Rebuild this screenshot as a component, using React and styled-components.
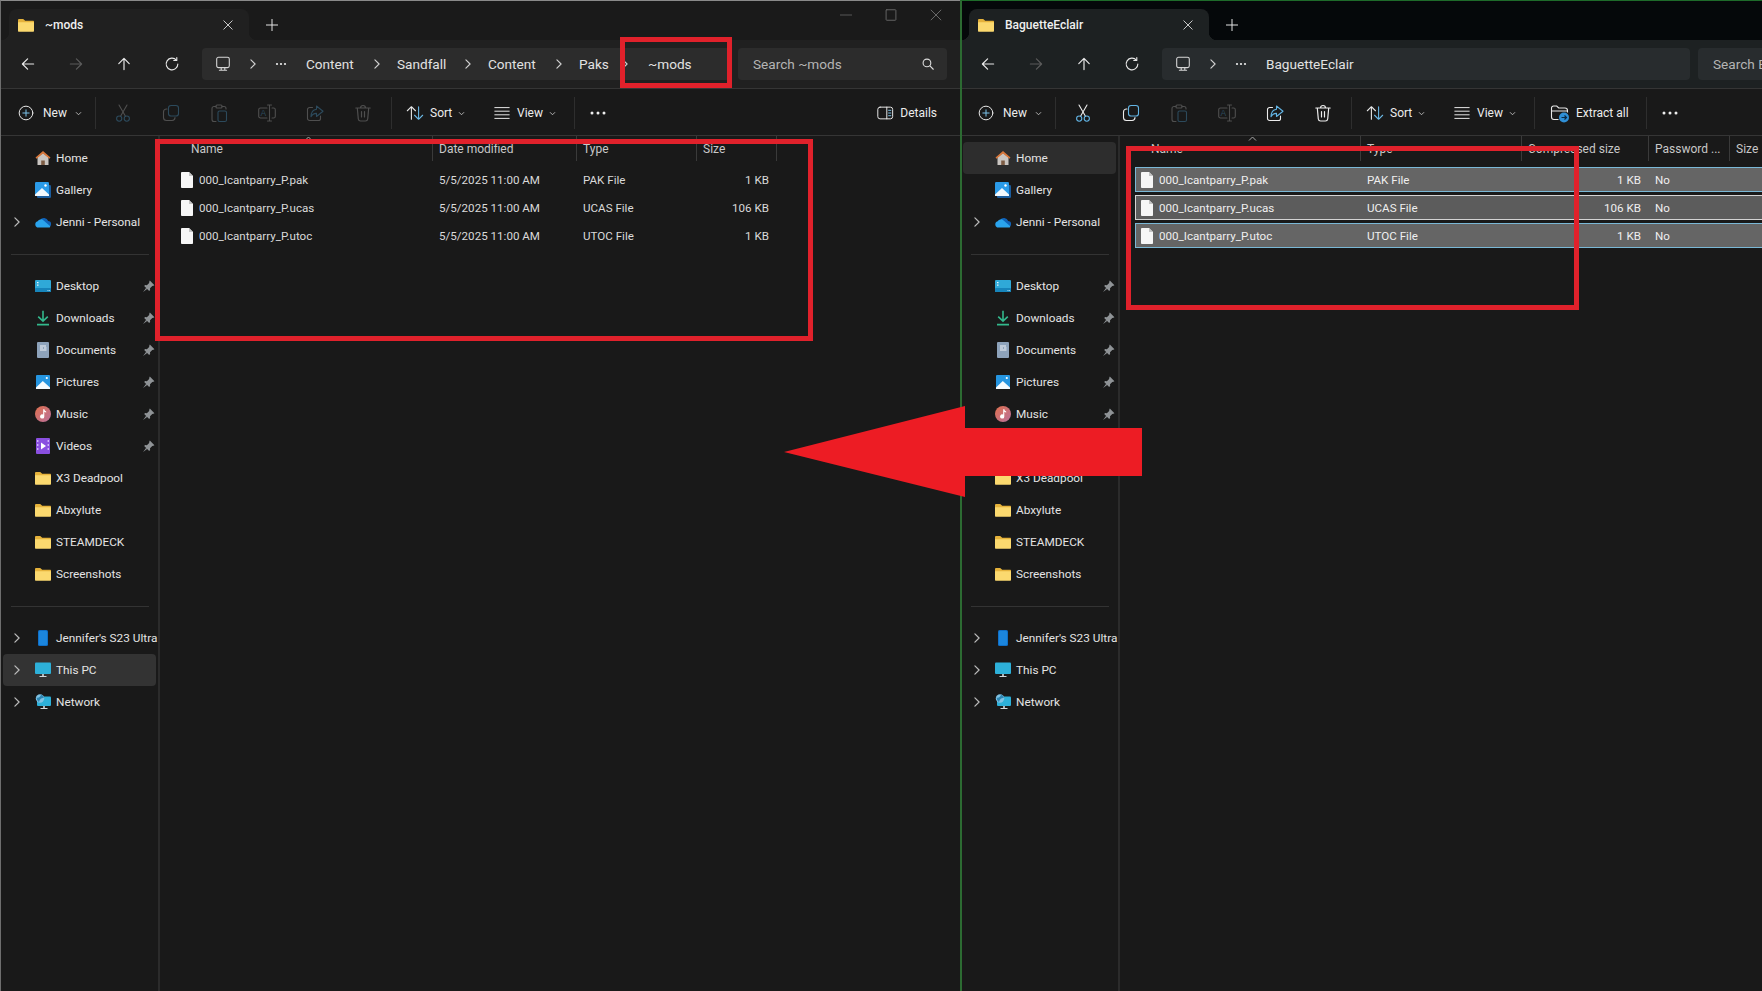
import React from 'react';
import styled, { createGlobalStyle } from 'styled-components';

const GlobalStyle = createGlobalStyle`
  html, body {
    margin: 0;
    padding: 0;
    background: #191919;
    overflow: hidden;
  }
  * {
    box-sizing: border-box;
  }
`;

const Page = styled.div`
  position: relative;
  display: flex;
  width: 1762px;
  height: 991px;
  overflow: hidden;
  font-family: 'Roboto', 'Noto Sans', sans-serif;
  font-size: 12px;
  color: #dcdcdc;
  background: #191919;
`;

const Window = styled.div`
  position: relative;
  display: flex;
  flex-direction: column;
  flex: none;
  width: ${(p) => p.$width}px;
  height: 100%;
  overflow: hidden;
  background: #191919;
  &::before {
    content: '';
    position: absolute;
    inset: 0;
    z-index: 2;
    pointer-events: none;
    border-top: 1px solid ${(p) => p.$edgeTop};
    border-left: ${(p) => p.$edgeWidth}px solid ${(p) => p.$edgeLeft};
  }
`;

const TabBar = styled.div`
  display: flex;
  flex: none;
  height: 40px;
  padding: 9px 0 0 9px;
  background: ${(p) => p.$bg};
`;

const Tab = styled.div`
  position: relative;
  display: flex;
  align-items: center;
  width: 240px;
  height: 31px;
  padding: 0 15px 0 9px;
  border-radius: 8px 8px 0 0;
  background: ${(p) => p.$bg};
  color: #f0f0f0;
  font-weight: 500;
  &::before,
  &::after {
    content: '';
    position: absolute;
    bottom: 0;
    width: 8px;
    height: 8px;
  }
  &::before {
    left: -8px;
    background: radial-gradient(circle at 0 0, transparent 8px, ${(p) => p.$bg} 8.5px);
  }
  &::after {
    right: -8px;
    background: radial-gradient(circle at 100% 0, transparent 8px, ${(p) => p.$bg} 8.5px);
  }
`;

const TabTitle = styled.span`
  flex: 1;
  margin-left: 11px;
`;

const TabPlus = styled.div`
  display: flex;
  align-items: center;
  justify-content: center;
  width: 16px;
  height: 31px;
  margin-left: 15px;
`;

const WindowControls = styled.div`
  display: flex;
  margin-left: auto;
  margin-top: -9px;
  padding-right: 17px;
  gap: 31px;
  height: 30px;
  align-items: center;
`;

const NavRow = styled.div`
  display: flex;
  flex: none;
  align-items: center;
  height: 49px;
  padding-left: 4px;
  padding-bottom: 1px;
  background: ${(p) => p.$bg};
  border-bottom: 1px solid #353535;
`;

const NavButton = styled.div`
  display: flex;
  flex: none;
  align-items: center;
  justify-content: center;
  width: 48px;
`;

const AddressBar = styled.div`
  display: flex;
  flex: none;
  align-items: center;
  width: 528px;
  height: 32px;
  margin-left: 6px;
  padding-left: 12px;
  border-radius: 4px;
  background: ${(p) => p.$bg};
  font-size: 13.6px;
  color: #e2e2e2;
`;

const PathChevron = styled.span`
  display: flex;
  margin-left: 14px;
`;

const PathDots = styled.span`
  display: flex;
  margin: 0 18px 0 14px;
`;

const Crumb = styled.span`
  display: flex;
  flex: none;
  align-items: center;
  justify-content: space-between;
  width: ${(p) => p.$w}px;
  padding-right: 13px;
`;

const CurrentCrumb = styled.span`
  margin-left: ${(p) => p.$gap || 0}px;
`;

const SearchBox = styled.div`
  display: flex;
  flex: none;
  align-items: center;
  justify-content: space-between;
  width: 209px;
  height: 32px;
  margin-left: 8px;
  padding: 0 12px 0 15px;
  border-radius: 4px;
  background: ${(p) => p.$bg};
  font-size: 13.6px;
  white-space: nowrap;
  color: #b4b4b4;
`;

const Toolbar = styled.div`
  display: flex;
  flex: none;
  align-items: center;
  height: 47px;
  padding: 2px 0 0 17px;
  border-bottom: 1px solid #353535;
  background: #191919;
`;

const ToolSep = styled.span`
  flex: none;
  width: 1px;
  height: 32px;
  margin: 0 3px 0 4px;
  background: #2e2e2e;
`;

const TextTool = styled.div`
  display: flex;
  flex: none;
  align-items: center;
  gap: ${(p) => p.$gap}px;
  width: ${(p) => p.$w}px;
  padding-left: ${(p) => p.$pad}px;
  color: #ececec;
`;

const TinyChevron = styled.svg`
  flex: none;
  width: 7px;
  height: 5px;
`;

const IconTool = styled.div`
  display: flex;
  flex: none;
  align-items: center;
  justify-content: center;
  width: 48px;
`;

const MoreTool = styled.div`
  display: flex;
  flex: none;
  justify-content: center;
  width: 42px;
`;

const DetailsTool = styled.div`
  display: flex;
  align-items: center;
  gap: 6px;
  margin-left: auto;
  margin-right: 23px;
  color: #ececec;
`;

const Body = styled.div`
  display: flex;
  flex: 1;
  min-height: 0;
`;

const Sidebar = styled.nav`
  flex: none;
  width: 160px;
  padding: 6px 0 0 3px;
  border-right: 2px solid #2b2b2b;
`;

const NavItem = styled.div`
  display: flex;
  align-items: center;
  width: 153px;
  height: 32px;
  border-radius: 4px;
  font-size: 11.8px;
  white-space: nowrap;
  color: #e4e4e4;
  background: ${(p) => (p.$active ? p.$activeBg : 'transparent')};
`;

const Caret = styled.span`
  display: flex;
  flex: none;
  justify-content: center;
  width: 28px;
`;

const NavIconSlot = styled.span`
  display: flex;
  flex: none;
  margin: 0 5px 0 4px;
`;

const NavLabel = styled.span`
  flex: 1;
`;

const PinSlot = styled.span`
  display: flex;
  flex: none;
  margin-right: 1px;
`;

const SideDivider = styled.div`
  width: 138px;
  height: 1px;
  margin: 16px 0 15px 8px;
  background: #333;
`;

const FileArea = styled.section`
  flex: 1;
  min-width: 0;
  padding-left: 15px;
`;

const HeaderRow = styled.div`
  display: grid;
  grid-template-columns: ${(p) => p.$cols};
  width: max-content;
  height: 25px;
  margin-bottom: 6px;
  color: #c8c8c8;
`;

const HeaderCell = styled.div`
  position: relative;
  display: flex;
  align-items: center;
  padding-left: ${(p) => p.$pad || 6}px;
  border-right: 1px solid #3a3a3a;
  &:last-child {
    border-right: ${(p) => (p.$open ? 'none' : '1px solid #3a3a3a')};
  }
`;

const SortMark = styled.svg`
  position: absolute;
  top: 0;
  left: 50%;
  width: 9px;
  height: 5px;
`;

const FileRow = styled.div`
  display: grid;
  grid-template-columns: ${(p) => p.$cols};
  align-items: center;
  width: max-content;
  height: 25px;
  margin-bottom: 3px;
  font-size: 11.6px;
  color: #dadada;
  ${(p) =>
    p.$selected &&
    `
    background: ${p.$focus ? '#5c5c5c' : '#656565'};
    box-shadow: inset 0 0 0 1px ${p.$focus ? '#d4d4d4' : '#7ab8d6'};
    color: #efefef;
  `}
`;

const NameCell = styled.div`
  display: flex;
  align-items: center;
  gap: 6px;
  padding-left: 6px;
`;

const TextCell = styled.div`
  padding-left: 6px;
`;

const NumCell = styled.div`
  padding-right: 8px;
  text-align: right;
`;

const RedBox = styled.div`
  position: absolute;
  top: ${(p) => p.$top}px;
  left: ${(p) => p.$left}px;
  width: ${(p) => p.$w}px;
  height: ${(p) => p.$h}px;
  border: 5px solid #e0212b;
  z-index: 5;
`;

const ArrowMark = styled.svg`
  position: absolute;
  top: 400px;
  left: 780px;
  z-index: 6;
`;

const Stroke = ({ children, size = 20, color = '#e8e8e8', width = 1.1 }) => (
  <svg width={size} height={size} viewBox="0 0 20 20" fill="none" stroke={color} strokeWidth={width} strokeLinecap="round" strokeLinejoin="round">
    {children}
  </svg>
);

const BackIcon = ({ color }) => (
  <Stroke color={color} size={16} width={1.5}>
    <path d="M17 10H3M9.5 3.5 3 10l6.5 6.5" />
  </Stroke>
);
const ForwardIcon = () => (
  <Stroke color="#5b5b5b" size={16} width={1.5}>
    <path d="M3 10h14M10.5 3.5 17 10l-6.5 6.5" />
  </Stroke>
);
const UpIcon = () => (
  <Stroke size={16} width={1.5}>
    <path d="M10 17V3M3.5 9.5 10 3l6.5 6.5" />
  </Stroke>
);
const RefreshIcon = () => (
  <Stroke size={16} width={1.4}>
    <path d="M15.5 5.2A7.3 7.3 0 1 0 17.3 10" />
    <path d="M16 1.8v3.8h-3.8" />
  </Stroke>
);
const PcOutline = () => (
  <Stroke size={18} color="#d6d6d6" width={1.2}>
    <rect x="3" y="2.5" width="14" height="11.5" rx="2" />
    <path d="M6 17h8M8 14.5V17M12 14.5V17" />
  </Stroke>
);
const PathArrow = () => (
  <Stroke size={14} color="#d0d0d0" width={1.6}>
    <path d="m7 4 6 6-6 6" />
  </Stroke>
);
const ThreeDots = ({ size = 14, gap = 5, r = 1.5 }) => (
  <svg width={size + 6} height="4" viewBox={`0 0 ${size + 6} 4`} fill="#eeeeee">
    <circle cx="3" cy="2" r={r} />
    <circle cx={3 + gap + 1} cy="2" r={r} />
    <circle cx={3 + 2 * (gap + 1)} cy="2" r={r} />
  </svg>
);
const SearchIcon = () => (
  <Stroke size={14} color="#dcdcdc" width={1.6}>
    <circle cx="8.5" cy="8.5" r="5.5" />
    <path d="m12.8 12.8 4.7 4.7" />
  </Stroke>
);
const CloseIcon = ({ color = '#e8e8e8', size = 14 }) => (
  <Stroke color={color} size={size} width={1.4}>
    <path d="m3 3 14 14M17 3 3 17" />
  </Stroke>
);
const PlusIcon = () => (
  <Stroke size={14} width={1.4}>
    <path d="M10 2v16M2 10h16" />
  </Stroke>
);
const MinIcon = () => (
  <Stroke color="#6a6a6a" size={14}>
    <path d="M2 10h16" />
  </Stroke>
);
const MaxIcon = () => (
  <Stroke color="#6a6a6a" size={14} width={1.3}>
    <rect x="3" y="2.5" width="14" height="15" rx="1" />
  </Stroke>
);

const FolderIcon = ({ size = 16 }) => (
  <svg width={size} height={size} viewBox="0 0 16 16">
    <path d="M0 3.2C0 2.5.5 2 1.2 2h4l2 1.8H15c.6 0 1 .4 1 1V6H0z" fill="#e5b23b" />
    <path d="M0 5.2h16v8.6c0 .6-.4 1-1 1H1c-.6 0-1-.4-1-1z" fill="#fbd96f" />
  </svg>
);

const FileIcon = () => (
  <svg width="12" height="16" viewBox="0 0 12 16" fill="#f6f6f6">
    <path d="M0 .8C0 .4.4 0 .8 0H8l4 4v11.2c0 .4-.4.8-.8.8H.8c-.4 0-.8-.4-.8-.8z" />
    <path d="M8 0v4h4z" fill="#c4c4c4" />
  </svg>
);

// toolbar icons, main strokes in white-ish and the accent part in blue
const NewIcon = () => (
  <Stroke size={18}>
    <circle cx="10" cy="10" r="7.6" />
    <path d="M10 6.5v7M6.5 10h7" stroke="#7cc3ea" />
  </Stroke>
);
const CutIcon = ({ c, a }) => (
  <Stroke color={c}>
    <path d="m6 2 6.6 11.5M14 2 7.4 13.5" />
    <circle cx="6.2" cy="15.6" r="2.6" stroke={a} />
    <circle cx="13.8" cy="15.6" r="2.6" stroke={a} />
  </Stroke>
);
const CopyIcon = ({ c, a }) => (
  <Stroke color={a}>
    <rect x="7.5" y="2.5" width="10" height="10.5" rx="2.6" />
    <path stroke={c} d="M6 6H5.4A2.9 2.9 0 0 0 2.5 8.9v5.6a3 3 0 0 0 3 3h5.6a2.9 2.9 0 0 0 2.9-2.9" />
  </Stroke>
);
const PasteIcon = ({ c, a }) => (
  <Stroke color={c}>
    <path d="M7 3.5H5A2 2 0 0 0 3 5.5v11A2 2 0 0 0 5 18.5h2M13 3.5h2a2 2 0 0 1 2 2V6" />
    <rect x="7" y="2" width="6" height="3" rx="1" />
    <rect x="9" y="8" width="8.5" height="10.5" rx="1.6" stroke={a} />
  </Stroke>
);
const RenameIcon = ({ c, a }) => (
  <Stroke color={c}>
    <path d="M10 5H3.5A1.8 1.8 0 0 0 1.7 6.8v6.4A1.8 1.8 0 0 0 3.5 15H10M15 5h1.5a1.8 1.8 0 0 1 1.8 1.8v6.4a1.8 1.8 0 0 1-1.8 1.8H15" />
    <path d="M12.5 2v16M10.5 2h4M10.5 18h4" />
    <text x="3.4" y="13" fontFamily="Liberation Sans, sans-serif" fontSize="8.5" fill={a} stroke="none">
      A
    </text>
  </Stroke>
);
const ShareIcon = ({ c, a }) => (
  <Stroke color={c}>
    <path d="M7.5 4.5H4.6A2.1 2.1 0 0 0 2.5 6.6v8.8a2.1 2.1 0 0 0 2.1 2.1h8.8a2.1 2.1 0 0 0 2.1-2.1V13" />
    <path stroke={a} d="M11.5 3 18 8.2l-6.5 5.3V10.4C9 10.3 7.2 11.5 6 13.8 6.1 9.6 8.3 6.7 11.5 6.3z" />
  </Stroke>
);
const DeleteIcon = ({ c }) => (
  <Stroke color={c} width={1.2}>
    <path d="M2.8 5h14.4M7.5 5a2.5 2.5 0 0 1 5 0M4.3 5l1 11a2.3 2.3 0 0 0 2.3 2h4.8a2.3 2.3 0 0 0 2.3-2l1-11M8.5 8.5V14M11.5 8.5V14" />
  </Stroke>
);
const SortIcon = () => (
  <Stroke size={18} width={1.2}>
    <path d="M6 17V3M1.5 7.5 6 3l4.5 4.5" />
    <path stroke="#6cb9e6" d="M14 3v14M9.5 12.5 14 17l4.5-4.5" />
  </Stroke>
);
const ViewIcon = () => (
  <Stroke size={18} width={1.1}>
    <path d="M2 4h16M2 8h16M2 12h16M2 16h16" />
  </Stroke>
);
const DetailsIcon = () => (
  <Stroke size={18}>
    <rect x="2" y="3.5" width="16.5" height="13" rx="2.5" />
    <path d="M12 3.5v13" />
    <path stroke="#7cc3ea" d="M14 7h2.5M14 10h2.5M14 13h2.5" />
  </Stroke>
);
const ExtractIcon = () => (
  <svg width="20" height="20" viewBox="0 0 20 20" fill="none">
    <path d="M8.5 16.5H4A2.5 2.5 0 0 1 1.5 14V5A2 2 0 0 1 3.5 3h3.2l2 2H15a2.5 2.5 0 0 1 2.5 2.5v2M1.5 8H17" stroke="#e8e8e8" strokeWidth="1.1" />
    <circle cx="14" cy="14.5" r="5" fill="#2f8fd6" />
    <path d="M11.5 14.5h5M14.5 12.5l2 2-2 2" stroke="#0b2a44" strokeWidth="1.2" />
  </svg>
);
const Caretdown = () => (
  <TinyChevron viewBox="0 0 8 6" fill="none" stroke="#bdbdbd" strokeWidth="1.1">
    <path d="m1 1.5 3 3 3-3" />
  </TinyChevron>
);

const HomeIcon = () => (
  <svg width="16" height="16" viewBox="0 0 16 16">
    <path d="M2.5 7.5 8 3l5.5 4.5V15h-11z" fill="#c9c5c1" />
    <path d="M6.2 10.5h3.6V15H6.2z" fill="#7d5c44" />
    <path d="M8 1 .5 7.6l1 1.2L8 3.4l6.5 5.4 1-1.2z" fill="#d9773a" />
  </svg>
);
const GalleryIcon = () => (
  <svg width="16" height="16" viewBox="0 0 16 16">
    <rect x="2" y="3" width="14" height="13" rx="1.2" fill="#1b5d9e" />
    <rect x="0" y="0" width="14" height="14" rx="1.2" fill="#2b9be8" />
    <path d="M0 12.5 7 6l7 6.5V14H0z" fill="#f2f8fd" />
    <circle cx="10.5" cy="3.5" r="1.2" fill="#fff" />
  </svg>
);
const CloudIcon = () => (
  <svg width="16" height="16" viewBox="0 0 16 16">
    <path d="M5 6.2a4.6 4.6 0 0 1 8.2.9A2.8 2.8 0 0 1 13.2 13H6z" fill="#0f62b8" />
    <path d="M3.4 13.6a3.2 3.2 0 0 1-.7-6.3 3.8 3.8 0 0 1 5.9-.9l6.4 5.6c.4.7.2 1.6-1 1.6z" fill="#2aa4ee" />
  </svg>
);
const DesktopIcon = () => (
  <svg width="16" height="16" viewBox="0 0 16 16">
    <rect x="0" y="2" width="16" height="12" rx="1" fill="#2fa9d8" />
    <rect x="0" y="10" width="16" height="4" rx="1" fill="#1785bb" />
    <path d="M2 4h1.5v1.2H2zM2 6.5h1.5v1.2H2zM12.5 12.2h1v.8h-1zM14 12.2h.8v.8H14z" fill="#e9f6fc" />
  </svg>
);
const DownloadIcon = () => (
  <svg width="16" height="16" viewBox="0 0 16 16" fill="none" stroke="#33b88c" strokeWidth="1.6">
    <path d="M8 .8v10.2M3.2 6.6 8 11.2l4.8-4.6M2 14.6h12" />
  </svg>
);
const DocumentIcon = () => (
  <svg width="16" height="16" viewBox="0 0 16 16">
    <rect x="2" y="0" width="12" height="16" rx="1" fill="#8ea3bb" />
    <path d="M5 3.5h6v1H5zM9 5.5h2.5v1H9zM5 5.5h3v1H5zM5 7.5h6.5v1H5z" fill="#f0f4f8" />
  </svg>
);
const PictureIcon = () => (
  <svg width="16" height="16" viewBox="0 0 16 16">
    <rect x="1" y="1" width="14" height="14" rx="1" fill="#2595e0" />
    <path d="M1 13.5 7.8 7l7.2 6.5V15H1z" fill="#f4fafe" />
    <circle cx="11.8" cy="4" r="1.1" fill="#fff" />
  </svg>
);
const MusicIcon = () => (
  <svg width="16" height="16" viewBox="0 0 16 16">
    <defs>
      <linearGradient id="musicFill" x1="0" y1="0" x2="1" y2="1">
        <stop offset="0" stopColor="#e0704d" />
        <stop offset="1" stopColor="#b9709c" />
      </linearGradient>
    </defs>
    <circle cx="8" cy="8" r="8" fill="url(#musicFill)" />
    <path d="M8.2 3.2h1.2c.1 1.3.9 1.8 1.8 2.2v1.2c-.7-.1-1.4-.4-1.9-.9v4.7a2.1 2.1 0 1 1-1.1-1.8z" fill="#fff" />
  </svg>
);
const VideoIcon = () => (
  <svg width="16" height="16" viewBox="0 0 16 16">
    <rect x="1" y="0" width="14" height="16" rx="1" fill="#8a4fe0" />
    <path d="M2 2h1.4v2H2zM2 6h1.4v2H2zM2 10h1.4v2H2zM12.6 2H14v2h-1.4zM12.6 6H14v2h-1.4zM12.6 10H14v2h-1.4z" fill="#cdb3f7" />
    <path d="m6 4.6 5 3.4-5 3.4z" fill="#fff" />
  </svg>
);
const PhoneIcon = () => (
  <svg width="16" height="16" viewBox="0 0 16 16">
    <rect x="3" y="0" width="10" height="16" rx="1.6" fill="#0f6fc8" />
    <rect x="4" y="1" width="8" height="14" rx="1" fill="#1b86de" />
  </svg>
);
const MonitorIcon = () => (
  <svg width="16" height="16" viewBox="0 0 16 16">
    <rect x="0" y="0.5" width="16" height="11.5" rx="1" fill="#2db0d9" />
    <path d="M7.2 12h1.6v2H7.2zM4.5 14h7v1h-7z" fill="#d2d7db" />
  </svg>
);
const NetworkIcon = () => (
  <svg width="16" height="16" viewBox="0 0 16 16">
    <rect x="2" y="2.5" width="14" height="9.5" rx="1" fill="#2db0d9" />
    <path d="M8.2 12h1.6v2H8.2zM5.5 14h7v1h-7z" fill="#d2d7db" />
    <circle cx="5" cy="4.5" r="4.2" fill="#7fc2e4" />
    <path d="M1.6 3.5c2 .8 3.8-.6 4.6-3 1.6 1 2.4 2 2.6 3.6-2.2-.4-4 .8-4.8 3.8-1.2-.6-2.2-2.4-2.4-4.4z" fill="#2f87b4" />
  </svg>
);
const PinIcon = () => (
  <svg width="13" height="13" viewBox="0 0 12 12" fill="#8f9396">
    <path d="M7.2.5 11.5 4.8l-1 .6-1 .1-2.1 2.1.1 1.6-.9.9L2 5.6l.9-.9 1.6.1 2.1-2.1.1-1zM3.7 7.3 1 11l3.7-2.7z" />
  </svg>
);
const CaretRight = () => (
  <Stroke size={12} color="#bcbcbc" width={2}>
    <path d="m6.5 3 7 7-7 7" />
  </Stroke>
);

const iconMap = {
  home: HomeIcon,
  gallery: GalleryIcon,
  cloud: CloudIcon,
  desktop: DesktopIcon,
  download: DownloadIcon,
  document: DocumentIcon,
  picture: PictureIcon,
  music: MusicIcon,
  video: VideoIcon,
  folder: FolderIcon,
  phone: PhoneIcon,
  monitor: MonitorIcon,
  network: NetworkIcon,
};

const navGroups = [
  [
    { label: 'Home', icon: 'home' },
    { label: 'Gallery', icon: 'gallery' },
    { label: 'Jenni - Personal', icon: 'cloud', caret: true },
  ],
  [
    { label: 'Desktop', icon: 'desktop', pin: true },
    { label: 'Downloads', icon: 'download', pin: true },
    { label: 'Documents', icon: 'document', pin: true },
    { label: 'Pictures', icon: 'picture', pin: true },
    { label: 'Music', icon: 'music', pin: true },
    { label: 'Videos', icon: 'video', pin: true },
    { label: 'X3 Deadpool', icon: 'folder' },
    { label: 'Abxylute', icon: 'folder' },
    { label: 'STEAMDECK', icon: 'folder' },
    { label: 'Screenshots', icon: 'folder' },
  ],
  [
    { label: "Jennifer's S23 Ultra", icon: 'phone', caret: true },
    { label: 'This PC', icon: 'monitor', caret: true },
    { label: 'Network', icon: 'network', caret: true },
  ],
];

const files = [
  { name: '000_Icantparry_P.pak', type: 'PAK File', size: '1 KB' },
  { name: '000_Icantparry_P.ucas', type: 'UCAS File', size: '106 KB' },
  { name: '000_Icantparry_P.utoc', type: 'UTOC File', size: '1 KB' },
];

const Side = ({ active, activeBg }) => (
  <Sidebar>
    {navGroups.map((group, i) => (
      <React.Fragment key={i}>
        {i > 0 && <SideDivider />}
        {group.map((item) => {
          const Icon = iconMap[item.icon];
          return (
            <NavItem key={item.label} $active={item.label === active} $activeBg={activeBg}>
              <Caret>{item.caret && <CaretRight />}</Caret>
              <NavIconSlot>
                <Icon />
              </NavIconSlot>
              <NavLabel>{item.label}</NavLabel>
              {item.pin && (
                <PinSlot>
                  <PinIcon />
                </PinSlot>
              )}
            </NavItem>
          );
        })}
      </React.Fragment>
    ))}
  </Sidebar>
);

const Tools = ({ dim, hasDetails, extract }) => {
  const on = { c: '#ececec', a: '#62b4e4' };
  const off = { c: '#4f4f4f', a: '#2c4a5c' };
  const cut = dim ? off : on;
  return (
    <Toolbar>
      <TextTool $w={74} $pad={0} $gap={8}>
        <NewIcon />
        New
        <Caretdown />
      </TextTool>
      <ToolSep />
      <IconTool>
        <CutIcon {...cut} />
      </IconTool>
      <IconTool>
        <CopyIcon {...cut} />
      </IconTool>
      <IconTool>
        <PasteIcon {...off} />
      </IconTool>
      <IconTool>
        <RenameIcon {...off} />
      </IconTool>
      <IconTool>
        <ShareIcon {...cut} />
      </IconTool>
      <IconTool>
        <DeleteIcon c={dim ? off.c : on.c} />
      </IconTool>
      <ToolSep />
      <TextTool $w={87} $pad={11} $gap={6}>
        <SortIcon />
        Sort
        <Caretdown />
      </TextTool>
      <TextTool $w={88} $pad={11} $gap={6}>
        <ViewIcon />
        View
        <Caretdown />
      </TextTool>
      <ToolSep />
      {extract && (
        <>
          <TextTool $w={104} $pad={12} $gap={6}>
            <ExtractIcon />
            Extract all
          </TextTool>
          <ToolSep />
        </>
      )}
      <MoreTool>
        <ThreeDots />
      </MoreTool>
      {hasDetails && (
        <DetailsTool>
          <DetailsIcon />
          Details
        </DetailsTool>
      )}
    </Toolbar>
  );
};

const Explorer = ({ width, edge, tabBar, chrome, field, title, path, search, active, dim, hasDetails, extract, controls, children }) => (
  <Window $width={width} $edgeTop={edge.top} $edgeLeft={edge.left} $edgeWidth={edge.width}>
    <TabBar $bg={tabBar}>
      <Tab $bg={chrome}>
        <FolderIcon />
        <TabTitle>{title}</TabTitle>
        <CloseIcon size={12} />
      </Tab>
      <TabPlus>
        <PlusIcon />
      </TabPlus>
      {controls && (
        <WindowControls>
          <MinIcon />
          <MaxIcon />
          <CloseIcon color="#6a6a6a" />
        </WindowControls>
      )}
    </TabBar>
    <NavRow $bg={chrome}>
      <NavButton>
        <BackIcon />
      </NavButton>
      <NavButton>
        <ForwardIcon />
      </NavButton>
      <NavButton>
        <UpIcon />
      </NavButton>
      <NavButton>
        <RefreshIcon />
      </NavButton>
      <AddressBar $bg={field}>
        <PcOutline />
        <PathChevron>
          <PathArrow />
        </PathChevron>
        <PathDots>
          <ThreeDots size={8} gap={3} r={1.1} />
        </PathDots>
        {path}
      </AddressBar>
      <SearchBox $bg={field}>
        {search}
        <SearchIcon />
      </SearchBox>
    </NavRow>
    <Tools dim={dim} hasDetails={hasDetails} extract={extract} />
    <Body>
      <Side active={active} activeBg={active === 'Home' ? '#2d2d2d' : '#333333'} />
      <FileArea>{children}</FileArea>
    </Body>
  </Window>
);

const leftCols = '258px 144px 120px 80px';
const rightCols = '226px 161px 127px 81px 60px';

const SortCaret = () => (
  <SortMark viewBox="0 0 9 5" fill="none" stroke="#a8a8a8" strokeWidth="1">
    <path d="m1 4.5 3.5-3.5L8 4.5" />
  </SortMark>
);

const App = () => (
  <Page>
    <GlobalStyle />
    <Explorer
      width={960}
      edge={{ top: '#8a8a8a', left: '#6e6e6e', width: 1 }}
      tabBar="#1a1a1a"
      chrome="#202020"
      field="#2c2c2c"
      title="~mods"
      search="Search ~mods"
      active="This PC"
      dim
      hasDetails
      controls
      path={
        <>
          <Crumb $w={91}>
            Content
            <PathArrow />
          </Crumb>
          <Crumb $w={91}>
            Sandfall
            <PathArrow />
          </Crumb>
          <Crumb $w={91}>
            Content
            <PathArrow />
          </Crumb>
          <Crumb $w={66}>
            Paks
            <PathArrow />
          </Crumb>
          <CurrentCrumb $gap={3}>~mods</CurrentCrumb>
        </>
      }
    >
      <HeaderRow $cols={leftCols}>
        <HeaderCell $pad={16}>
          Name
          <SortCaret />
        </HeaderCell>
        <HeaderCell>Date modified</HeaderCell>
        <HeaderCell>Type</HeaderCell>
        <HeaderCell>Size</HeaderCell>
      </HeaderRow>
      {files.map((f) => (
        <FileRow key={f.name} $cols={leftCols}>
          <NameCell>
            <FileIcon />
            {f.name}
          </NameCell>
          <TextCell>5/5/2025 11:00 AM</TextCell>
          <TextCell>{f.type}</TextCell>
          <NumCell>{f.size}</NumCell>
        </FileRow>
      ))}
    </Explorer>
    <Explorer
      width={802}
      edge={{ top: '#1e6b2a', left: '#2c6b32', width: 2 }}
      tabBar="#05080a"
      chrome="#1d2122"
      field="#282c2e"
      title="BaguetteEclair"
      search="Search BaguetteEclair"
      active="Home"
      extract
      path={<CurrentCrumb>BaguetteEclair</CurrentCrumb>}
    >
      <HeaderRow $cols={rightCols}>
        <HeaderCell $pad={16}>
          Name
          <SortCaret />
        </HeaderCell>
        <HeaderCell>Type</HeaderCell>
        <HeaderCell>Compressed size</HeaderCell>
        <HeaderCell>Password ...</HeaderCell>
        <HeaderCell $open>Size</HeaderCell>
      </HeaderRow>
      {files.map((f, i) => (
        <FileRow key={f.name} $cols={rightCols} $selected $focus={i === 1}>
          <NameCell>
            <FileIcon />
            {f.name}
          </NameCell>
          <TextCell>{f.type}</TextCell>
          <NumCell>{f.size}</NumCell>
          <TextCell>No</TextCell>
          <span />
        </FileRow>
      ))}
    </Explorer>
    <RedBox $top={37} $left={620} $w={112} $h={51} />
    <RedBox $top={139} $left={155} $w={658} $h={202} />
    <RedBox $top={146} $left={1126} $w={453} $h={164} />
    <ArrowMark width="370" height="104" viewBox="780 400 370 104">
      <path d="M784 452 965 406V428H1142V476H965V497Z" fill="#ed1c24" />
    </ArrowMark>
  </Page>
);

export default App;
